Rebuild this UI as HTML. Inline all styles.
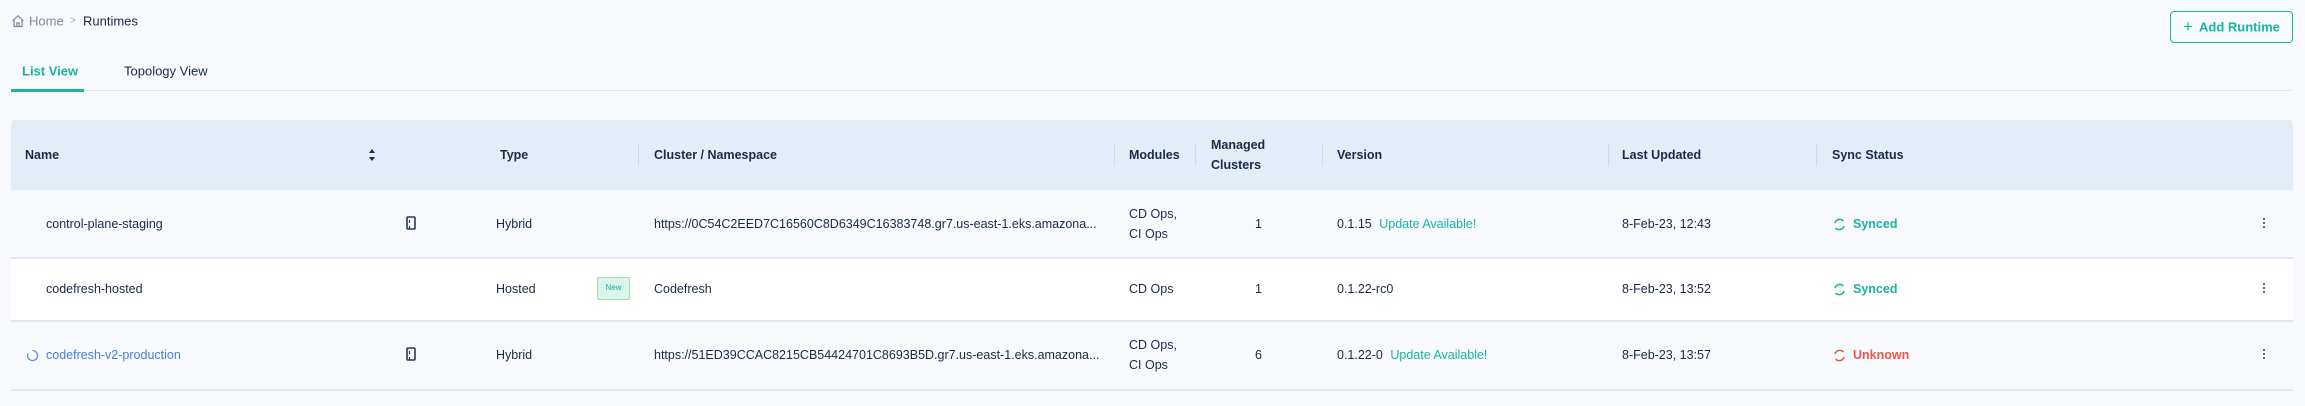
<!DOCTYPE html>
<html><head><meta charset="utf-8"><style>
*{margin:0;padding:0;box-sizing:border-box}
body{width:2305px;height:406px;background:#f7f9fd;font-family:"Liberation Sans",sans-serif;font-size:12.5px;color:#1b2a48;position:relative;overflow:hidden}
.a{position:absolute;white-space:nowrap}
.c{transform:translateY(-50%)}
.hd{font-weight:bold}
.div{position:absolute;width:1px;height:22px;top:144px;background:#cfdbea}
.t{color:#19b39e}
.ln{position:absolute;left:11px;width:2282px;height:1.5px;background:#dfe8f4}
.k{position:absolute;width:2px;height:12px;background:radial-gradient(circle,#3a4860 0.9px,transparent 1.1px) 0 0/2px 4px repeat-y}
</style></head><body>
<svg class="a" style="left:11px;top:14px" width="14" height="14" viewBox="0 0 14 14" fill="none" stroke="#7c8ca6" stroke-width="1.2"><path d="M1.5 7L7 1.8 12.5 7M3 5.8V12.5h8V5.8M5.8 12.5V9h2.4v3.5"/></svg>
<div class="a c" style="left:29px;top:21px;color:#7c8ca6;font-size:13px">Home</div>
<div class="a c" style="left:70px;top:21px;color:#9aa6b8;font-size:10px">&gt;</div>
<div class="a c" style="left:83px;top:21px;font-size:13px">Runtimes</div>
<div class="a" style="left:2170px;top:11px;width:123px;height:32px;border:1.5px solid #19b39e;border-radius:4px;background:#f7f9fd"></div>
<div class="a c t" style="left:2183px;top:27px;font-size:17px">+</div>
<div class="a c t hd" style="left:2199px;top:27px;font-size:13px">Add Runtime</div>
<div class="a c t hd" style="left:22px;top:71px;font-size:13px">List View</div>
<div class="a c" style="left:124px;top:71px;font-size:13px">Topology View</div>
<div class="a" style="left:11px;top:90px;width:2282px;height:1px;background:#e0e7f1"></div>
<div class="a" style="left:11px;top:89px;width:73px;height:3px;background:#19b39e"></div>

<div class="a" style="left:11px;top:120px;width:2282px;height:70px;background:#e3edf8;border-radius:4px 4px 0 0"></div>
<div class="a" style="left:11px;top:258px;width:2282px;height:62px;background:#fff"></div>
<div class="ln" style="top:257px"></div><div class="ln" style="top:320px"></div><div class="ln" style="top:389px"></div>

<div class="a c hd" style="left:25px;top:155px">Name</div>
<svg class="a" style="left:368px;top:148px" width="8" height="14" viewBox="0 0 8 14"><path d="M4 1L7 5H1zM4 13L1 9h6z" fill="#1b2a48"/></svg>
<div class="a c hd" style="left:500px;top:155px">Type</div>
<div class="div" style="left:638px"></div>
<div class="a c hd" style="left:654px;top:155px">Cluster / Namespace</div>
<div class="div" style="left:1114px"></div>
<div class="a c hd" style="left:1129px;top:155px">Modules</div>
<div class="div" style="left:1195px"></div>
<div class="a hd" style="left:1211px;top:135px;line-height:20px">Managed<br>Clusters</div>
<div class="div" style="left:1322px"></div>
<div class="a c hd" style="left:1337px;top:155px">Version</div>
<div class="div" style="left:1608px"></div>
<div class="a c hd" style="left:1622px;top:155px">Last Updated</div>
<div class="div" style="left:1816px"></div>
<div class="a c hd" style="left:1832px;top:155px">Sync Status</div>

<!-- row1 -->
<div class="a c" style="left:46px;top:224px">control-plane-staging</div>
<svg class="a" style="left:406px;top:216px" width="10" height="15" viewBox="0 0 10 15" fill="none" stroke="#2a3a58" stroke-width="1.6"><rect x="1" y="1" width="8" height="12" rx="1"/><path d="M3.5 4v3M3.5 10v3" stroke-width="1.2"/></svg>
<div class="a c" style="left:496px;top:224px">Hybrid</div>
<div class="a c" style="left:654px;top:224px">https://0C54C2EED7C16560C8D6349C16383748.gr7.us-east-1.eks.amazona...</div>
<div class="a" style="left:1129px;top:204px;line-height:20px">CD Ops,<br>CI Ops</div>
<div class="a c" style="left:1255px;top:224px">1</div>
<div class="a c" style="left:1337px;top:224px">0.1.15 <span class="t" style="margin-left:4px">Update Available!</span></div>
<div class="a c" style="left:1622px;top:224px">8-Feb-23, 12:43</div>
<svg class="a" style="left:1833px;top:218px" width="13" height="13" viewBox="0 0 13 13" fill="none" stroke="#19b39e" stroke-width="1.5"><path d="M2 5A5 5 0 0 1 10.5 3M11 8A5 5 0 0 1 2.5 10" /></svg>
<div class="a c t hd" style="left:1853px;top:224px">Synced</div>
<div class="k" style="left:2263px;top:217px"></div>

<!-- row2 -->
<div class="a c" style="left:46px;top:289px">codefresh-hosted</div>
<div class="a c" style="left:496px;top:289px">Hosted</div>
<div class="a" style="left:597px;top:277px;width:33px;height:23px;background:#dbf4f0;border:1.5px solid #9ee39e;border-radius:2px;color:#19b39e;font-size:8px;text-align:center;line-height:20px">New</div>
<div class="a c" style="left:654px;top:289px">Codefresh</div>
<div class="a c" style="left:1129px;top:289px">CD Ops</div>
<div class="a c" style="left:1255px;top:289px">1</div>
<div class="a c" style="left:1337px;top:289px">0.1.22-rc0</div>
<div class="a c" style="left:1622px;top:289px">8-Feb-23, 13:52</div>
<svg class="a" style="left:1833px;top:283px" width="13" height="13" viewBox="0 0 13 13" fill="none" stroke="#19b39e" stroke-width="1.5"><path d="M2 5A5 5 0 0 1 10.5 3M11 8A5 5 0 0 1 2.5 10" /></svg>
<div class="a c t hd" style="left:1853px;top:289px">Synced</div>
<div class="k" style="left:2263px;top:282px"></div>

<!-- row3 -->
<svg class="a" style="left:26px;top:349px" width="13" height="13" viewBox="0 0 13 13" fill="none" stroke="#6a8fd6" stroke-width="1.3"><path d="M6.5 1.5A5 5 0 1 1 2 4.5"/></svg>
<div class="a c" style="left:46px;top:355px;color:#4a7dd6">codefresh-v2-production</div>
<svg class="a" style="left:406px;top:347px" width="10" height="15" viewBox="0 0 10 15" fill="none" stroke="#2a3a58" stroke-width="1.6"><rect x="1" y="1" width="8" height="12" rx="1"/><path d="M3.5 4v3M3.5 10v3" stroke-width="1.2"/></svg>
<div class="a c" style="left:496px;top:355px">Hybrid</div>
<div class="a c" style="left:654px;top:355px">https://51ED39CCAC8215CB54424701C8693B5D.gr7.us-east-1.eks.amazona...</div>
<div class="a" style="left:1129px;top:335px;line-height:20px">CD Ops,<br>CI Ops</div>
<div class="a c" style="left:1255px;top:355px">6</div>
<div class="a c" style="left:1337px;top:355px">0.1.22-0 <span class="t" style="margin-left:4px">Update Available!</span></div>
<div class="a c" style="left:1622px;top:355px">8-Feb-23, 13:57</div>
<svg class="a" style="left:1833px;top:349px" width="13" height="13" viewBox="0 0 13 13" fill="none" stroke="#e8574a" stroke-width="1.5"><path d="M2 5A5 5 0 0 1 10.5 3M11 8A5 5 0 0 1 2.5 10" /></svg>
<div class="a c hd" style="left:1853px;top:355px;color:#e8574a">Unknown</div>
<div class="k" style="left:2263px;top:348px"></div>
</body></html>
